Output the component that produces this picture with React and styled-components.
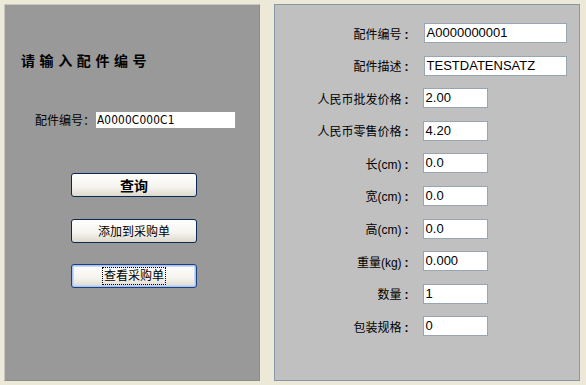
import styled, { createGlobalStyle } from "styled-components";

const GlobalStyle = createGlobalStyle`
  html, body {
    margin: 0;
    padding: 0;
    background: #ece9d8;
  }
  body {
    font-family: "Liberation Sans", "Noto Sans CJK SC", sans-serif;
    font-size: 12px;
    color: #000;
  }
`;

const Page = styled.div`
  width: 586px;
  height: 385px;
  box-sizing: border-box;
  padding: 4px 6px 4px 4px;
  display: flex;
  gap: 14px;
`;

const SearchPanel = styled.div`
  width: 256px;
  height: 377px;
  box-sizing: border-box;
  background: #999999;
  border: 1px solid #8c8c8c;
  border-top-color: #c8c8c0;
  border-left-color: #c8c8c0;
  padding: 47px 0 0 16px;
  display: flex;
  flex-direction: column;
`;

const Title = styled.div`
  font-size: 14px;
  font-weight: bold;
  letter-spacing: 4.6px;
  line-height: 16px;
  font-family: "Noto Sans CJK SC", sans-serif;
`;

const SearchRow = styled.div`
  margin-top: 43px;
  margin-left: 14px;
  display: flex;
  align-items: center;
`;

const SearchLabel = styled.span`
  width: 61px;
  font-size: 12px;
`;

const PlainInput = styled.div`
  width: 157px;
  height: 16px;
  background: #fff;
  padding-left: 1px;
  line-height: 16px;
  font-size: 12px;
  letter-spacing: 0.2px;
  font-family: "DejaVu Sans", sans-serif;
  transform: scaleX(0.88);
  transform-origin: left center;
`;

const Buttons = styled.div`
  margin-top: 45px;
  margin-left: 50px;
  display: flex;
  flex-direction: column;
  gap: 21.5px;
`;

const Button = styled.div`
  width: 126px;
  height: 24px;
  box-sizing: border-box;
  border: 1px solid ${(p) => (p.$focused ? "#1d3f7a" : "#0a2a55")};
  border-radius: 3px;
  background: linear-gradient(#ffffff, #f4f3ee 60%, #dcd9cc);
  display: flex;
  align-items: center;
  justify-content: center;
  font-size: ${(p) => (p.$bold ? "14px" : "12px")};
  font-weight: ${(p) => (p.$bold ? "bold" : "normal")};
  box-shadow: ${(p) =>
    p.$focused ? "inset 0 0 0 1px #a9c3ee, inset 0 0 0 2px #c6d8f5" : "none"};
`;

const FocusText = styled.span`
  outline: 1px dotted #000;
  padding: 0 1px;
  line-height: 16px;
`;

const DetailPanel = styled.div`
  width: 307px;
  height: 377px;
  box-sizing: border-box;
  background: #c0c0c0;
  border: 1px solid #8797a8;
  padding: 18px 0 0 0;
  display: grid;
  grid-template-columns: 134px auto;
  column-gap: 15px;
  row-gap: 12.6px;
  grid-auto-rows: 20px;
  align-content: start;
`;

const FieldLabel = styled.span`
  justify-self: end;
  align-self: center;
  font-size: 12px;
  white-space: nowrap;
`;

const Colon = styled.b`
  margin-left: 3px;
`;

const Field = styled.div`
  width: ${(p) => (p.$wide ? "143px" : "65px")};
  height: 20px;
  box-sizing: border-box;
  margin-left: ${(p) => (p.$wide ? "0" : "-1px")};
  background: #fff;
  border: 1px solid #98a6b4;
  padding-left: 2px;
  font-size: 13px;
  line-height: 18px;
  overflow: hidden;
  white-space: nowrap;
`;

const fields = [
  { label: "配件编号", value: "A0000000001", wide: true },
  { label: "配件描述", value: "TESTDATENSATZ", wide: true },
  { label: "人民币批发价格", value: "2.00" },
  { label: "人民币零售价格", value: "4.20" },
  { label: "长(cm)", value: "0.0" },
  { label: "宽(cm)", value: "0.0" },
  { label: "高(cm)", value: "0.0" },
  { label: "重量(kg)", value: "0.000" },
  { label: "数量", value: "1" },
  { label: "包装规格", value: "0" },
];

export default function App() {
  return (
    <>
      <GlobalStyle />
      <Page>
        <SearchPanel>
          <Title>请输入配件编号</Title>
          <SearchRow>
            <SearchLabel>配件编号：</SearchLabel>
            <PlainInput>A0000C000C1</PlainInput>
          </SearchRow>
          <Buttons>
            <Button $bold>查询</Button>
            <Button>添加到采购单</Button>
            <Button $focused>
              <FocusText>查看采购单</FocusText>
            </Button>
          </Buttons>
        </SearchPanel>
        <DetailPanel>
          {fields.map((f) => [
            <FieldLabel key={f.label + "-l"}>
              {f.label}
              <Colon>:</Colon>
            </FieldLabel>,
            <Field key={f.label + "-v"} $wide={f.wide}>
              {f.value}
            </Field>,
          ])}
        </DetailPanel>
      </Page>
    </>
  );
}
